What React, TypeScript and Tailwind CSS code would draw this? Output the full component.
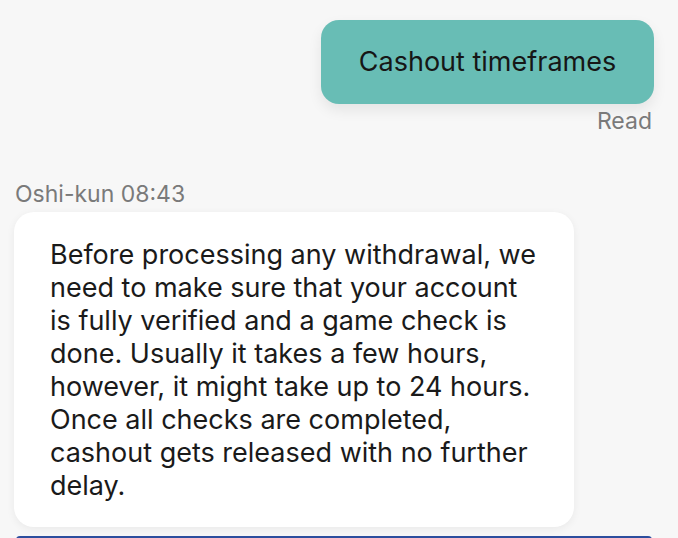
export default function App() {
  const reply =
    'Before processing any withdrawal, we need to make sure that your account is fully verified and a game check is done. Usually it takes a few hours, however, it might take up to 24 hours. Once all checks are completed, cashout gets released with no further delay.';

  return (
    <div className="min-h-screen bg-[#f7f7f7] font-['Inter','Liberation_Sans',sans-serif] overflow-hidden">
      {/* outgoing */}
      <div className="flex flex-col items-end pt-5 pr-6">
        <div className="flex h-[84px] w-[333px] items-center justify-center rounded-[18px] bg-[#68bdb5] text-[27px] text-[#161616] shadow-[0_6px_14px_rgba(0,0,0,0.08)]">
          Cashout timeframes
        </div>
        <div className="mt-[3px] pr-[2px] text-[23px] leading-[28px] text-[#7a7a7a]">Read</div>
      </div>

      {/* incoming */}
      <div className="mt-[45px] px-[14px]">
        <div className="pl-[1px] text-[23px] leading-[28px] text-[#7a7a7a]">Oshi-kun 08:43</div>
        <div className="mt-[4px] w-[560px] rounded-[20px] bg-white pt-[26px] pb-[25px] pl-[36px] pr-[30px] text-[27px] leading-[33px] text-[#1a1a1a] shadow-[0_2px_8px_rgba(0,0,0,0.06)]">
          {reply}
        </div>
      </div>

      {/* composer edge */}
      <div className="ml-[16px] mr-[26px] mt-[9px] h-[4px] rounded-t-[4px] bg-[#2d4e9e]" />
    </div>
  );
}
